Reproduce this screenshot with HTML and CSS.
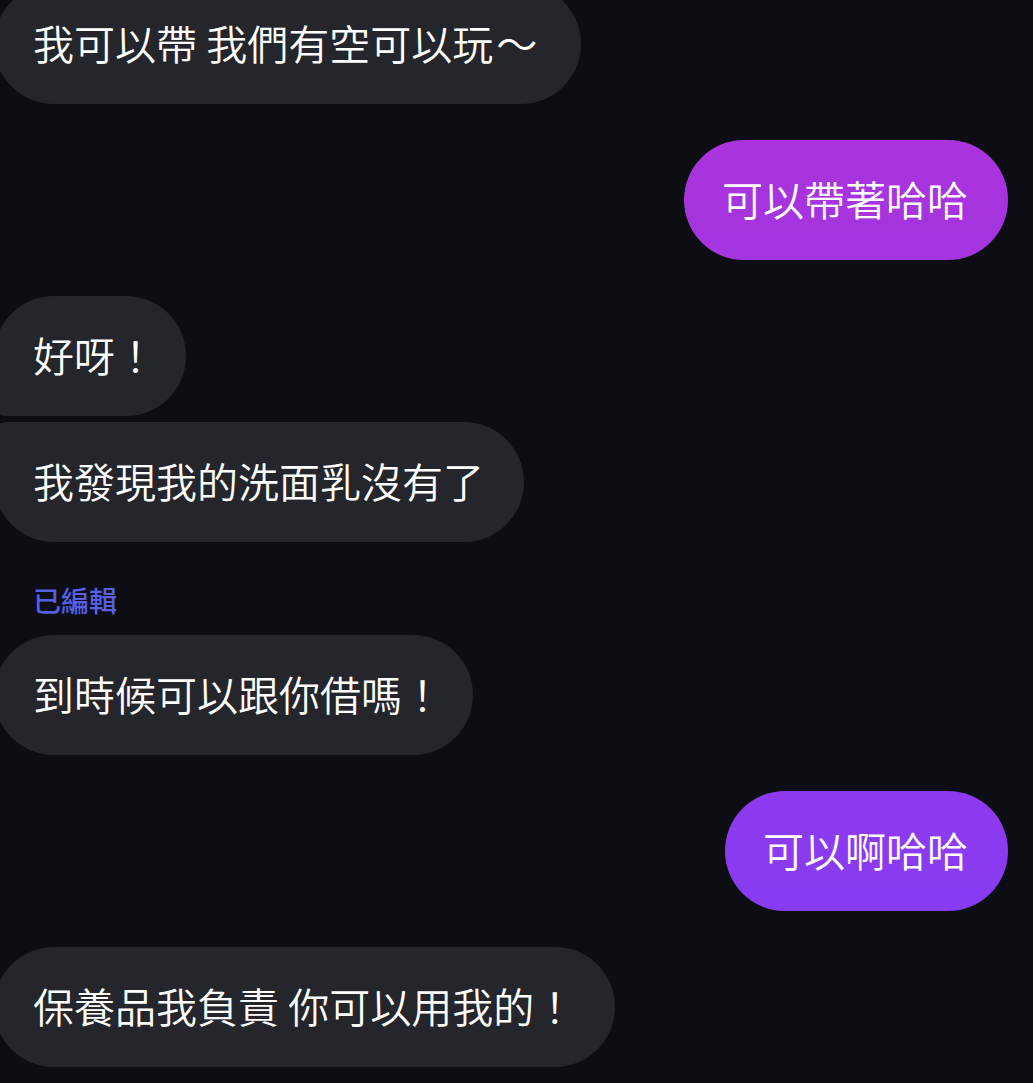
FILE: index.html
```html
<!DOCTYPE html>
<html lang="zh-Hant">
<head>
<meta charset="utf-8">
<title>Chat</title>
<link rel="stylesheet" href="styles.css">
</head>
<body>
<div class="thread">
  <div class="row in first-pull"><div class="bubble in-last">我可以帶 我們有空可以玩<span class="wide">～</span></div></div>
  <div class="row out gap"><div class="bubble sent">可以帶著哈哈</div></div>
  <div class="row in gap"><div class="bubble in-first">好呀<span class="narrow">！</span></div></div>
  <div class="row in tight"><div class="bubble in-last-top">我發現我的洗面乳沒有了</div></div>
  <div class="edited">已編輯</div>
  <div class="row in after-label"><div class="bubble">到時候可以跟你借嗎<span class="narrow">！</span></div></div>
  <div class="row out gap"><div class="bubble sent">可以啊哈哈</div></div>
  <div class="row in gap"><div class="bubble">保養品我負責 你可以用我的！</div></div>
</div>
</body>
</html>
```
FILE: styles.css
```css
html, body {
  margin: 0;
  padding: 0;
  background: #0c0e13;
  height: 100%;
  overflow: hidden;
}
body {
  font-family: "Noto Sans CJK TC", "Noto Sans CJK SC", "Noto Sans", sans-serif;
  color: #ffffff;
}
.thread {
  display: flex;
  flex-direction: column;
  padding-right: 25px;
}
.row {
  display: flex;
}
.row.in {
  justify-content: flex-start;
  margin-left: -6px;
}
.row.out {
  justify-content: flex-end;
}
.first-pull { margin-top: -16px; }
.gap { margin-top: 36px; }
.tight { margin-top: 6px; }
.after-label { margin-top: 17px; }
.bubble {
  height: 120px;
  line-height: 116px;
  padding: 0 40px 0 39px;
  font-size: 41px;
  font-weight: 350;
  border-radius: 60px;
  background: #24262b;
  white-space: nowrap;
  box-sizing: border-box;
}
.bubble.in-first {
  border-bottom-left-radius: 12px;
}
.bubble.in-last-top {
  border-top-left-radius: 12px;
}
.bubble.sent {
  background: linear-gradient(180deg, #b632d8 0%, #a534df 20%, #8a3bf0 80%, #7c3ff6 100%);
  background-attachment: fixed;
  padding: 0 40px 0 38px;
}
.narrow {
  letter-spacing: -10px;
}
.wide {
  padding-left: 3px;
  padding-right: 4px;
}
.edited {
  margin-top: 40px;
  padding-left: 33px;
  font-size: 28px;
  line-height: 36px;
  color: #5660e6;
  font-weight: 500;
}
```
